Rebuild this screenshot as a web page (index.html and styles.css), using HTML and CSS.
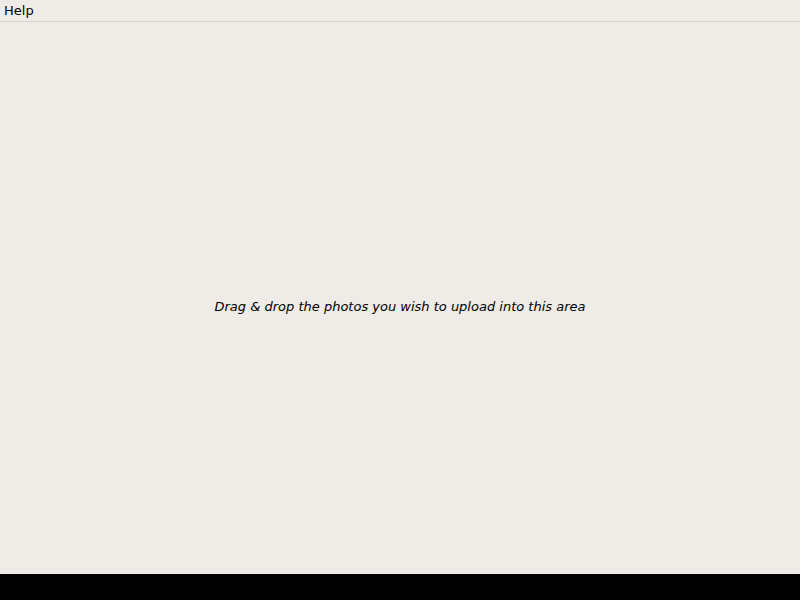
FILE: index.html
```html
<!DOCTYPE html>
<html>
<head>
<meta charset="utf-8">
<link rel="stylesheet" href="styles.css">
</head>
<body>
<div class="app">
  <div class="menubar"><span class="menu-item">Help</span></div>
  <div class="drop-area"><span class="drop-text">Drag &amp; drop the photos you wish to upload into this area</span></div>
  <div class="statusbar"></div>
</div>
</body>
</html>
```
FILE: styles.css
```css
html, body {
  margin: 0;
  padding: 0;
  background: #efebe7;
}
.app {
  width: 800px;
  height: 600px;
  display: flex;
  flex-direction: column;
  font-family: "DejaVu Sans", sans-serif;
  font-size: 13px;
  color: #000;
}
.menubar {
  height: 21px;
  border-bottom: 1px solid #d6d2ce;
  display: flex;
  align-items: center;
  padding-left: 4px;
}
.menu-item {
  line-height: 21px;
}
.drop-area {
  flex: 1;
  display: flex;
  align-items: center;
  justify-content: center;
  padding-top: 16px;
}
.drop-text {
  font-style: italic;
}
.statusbar {
  height: 26px;
  background: #000;
}
```
